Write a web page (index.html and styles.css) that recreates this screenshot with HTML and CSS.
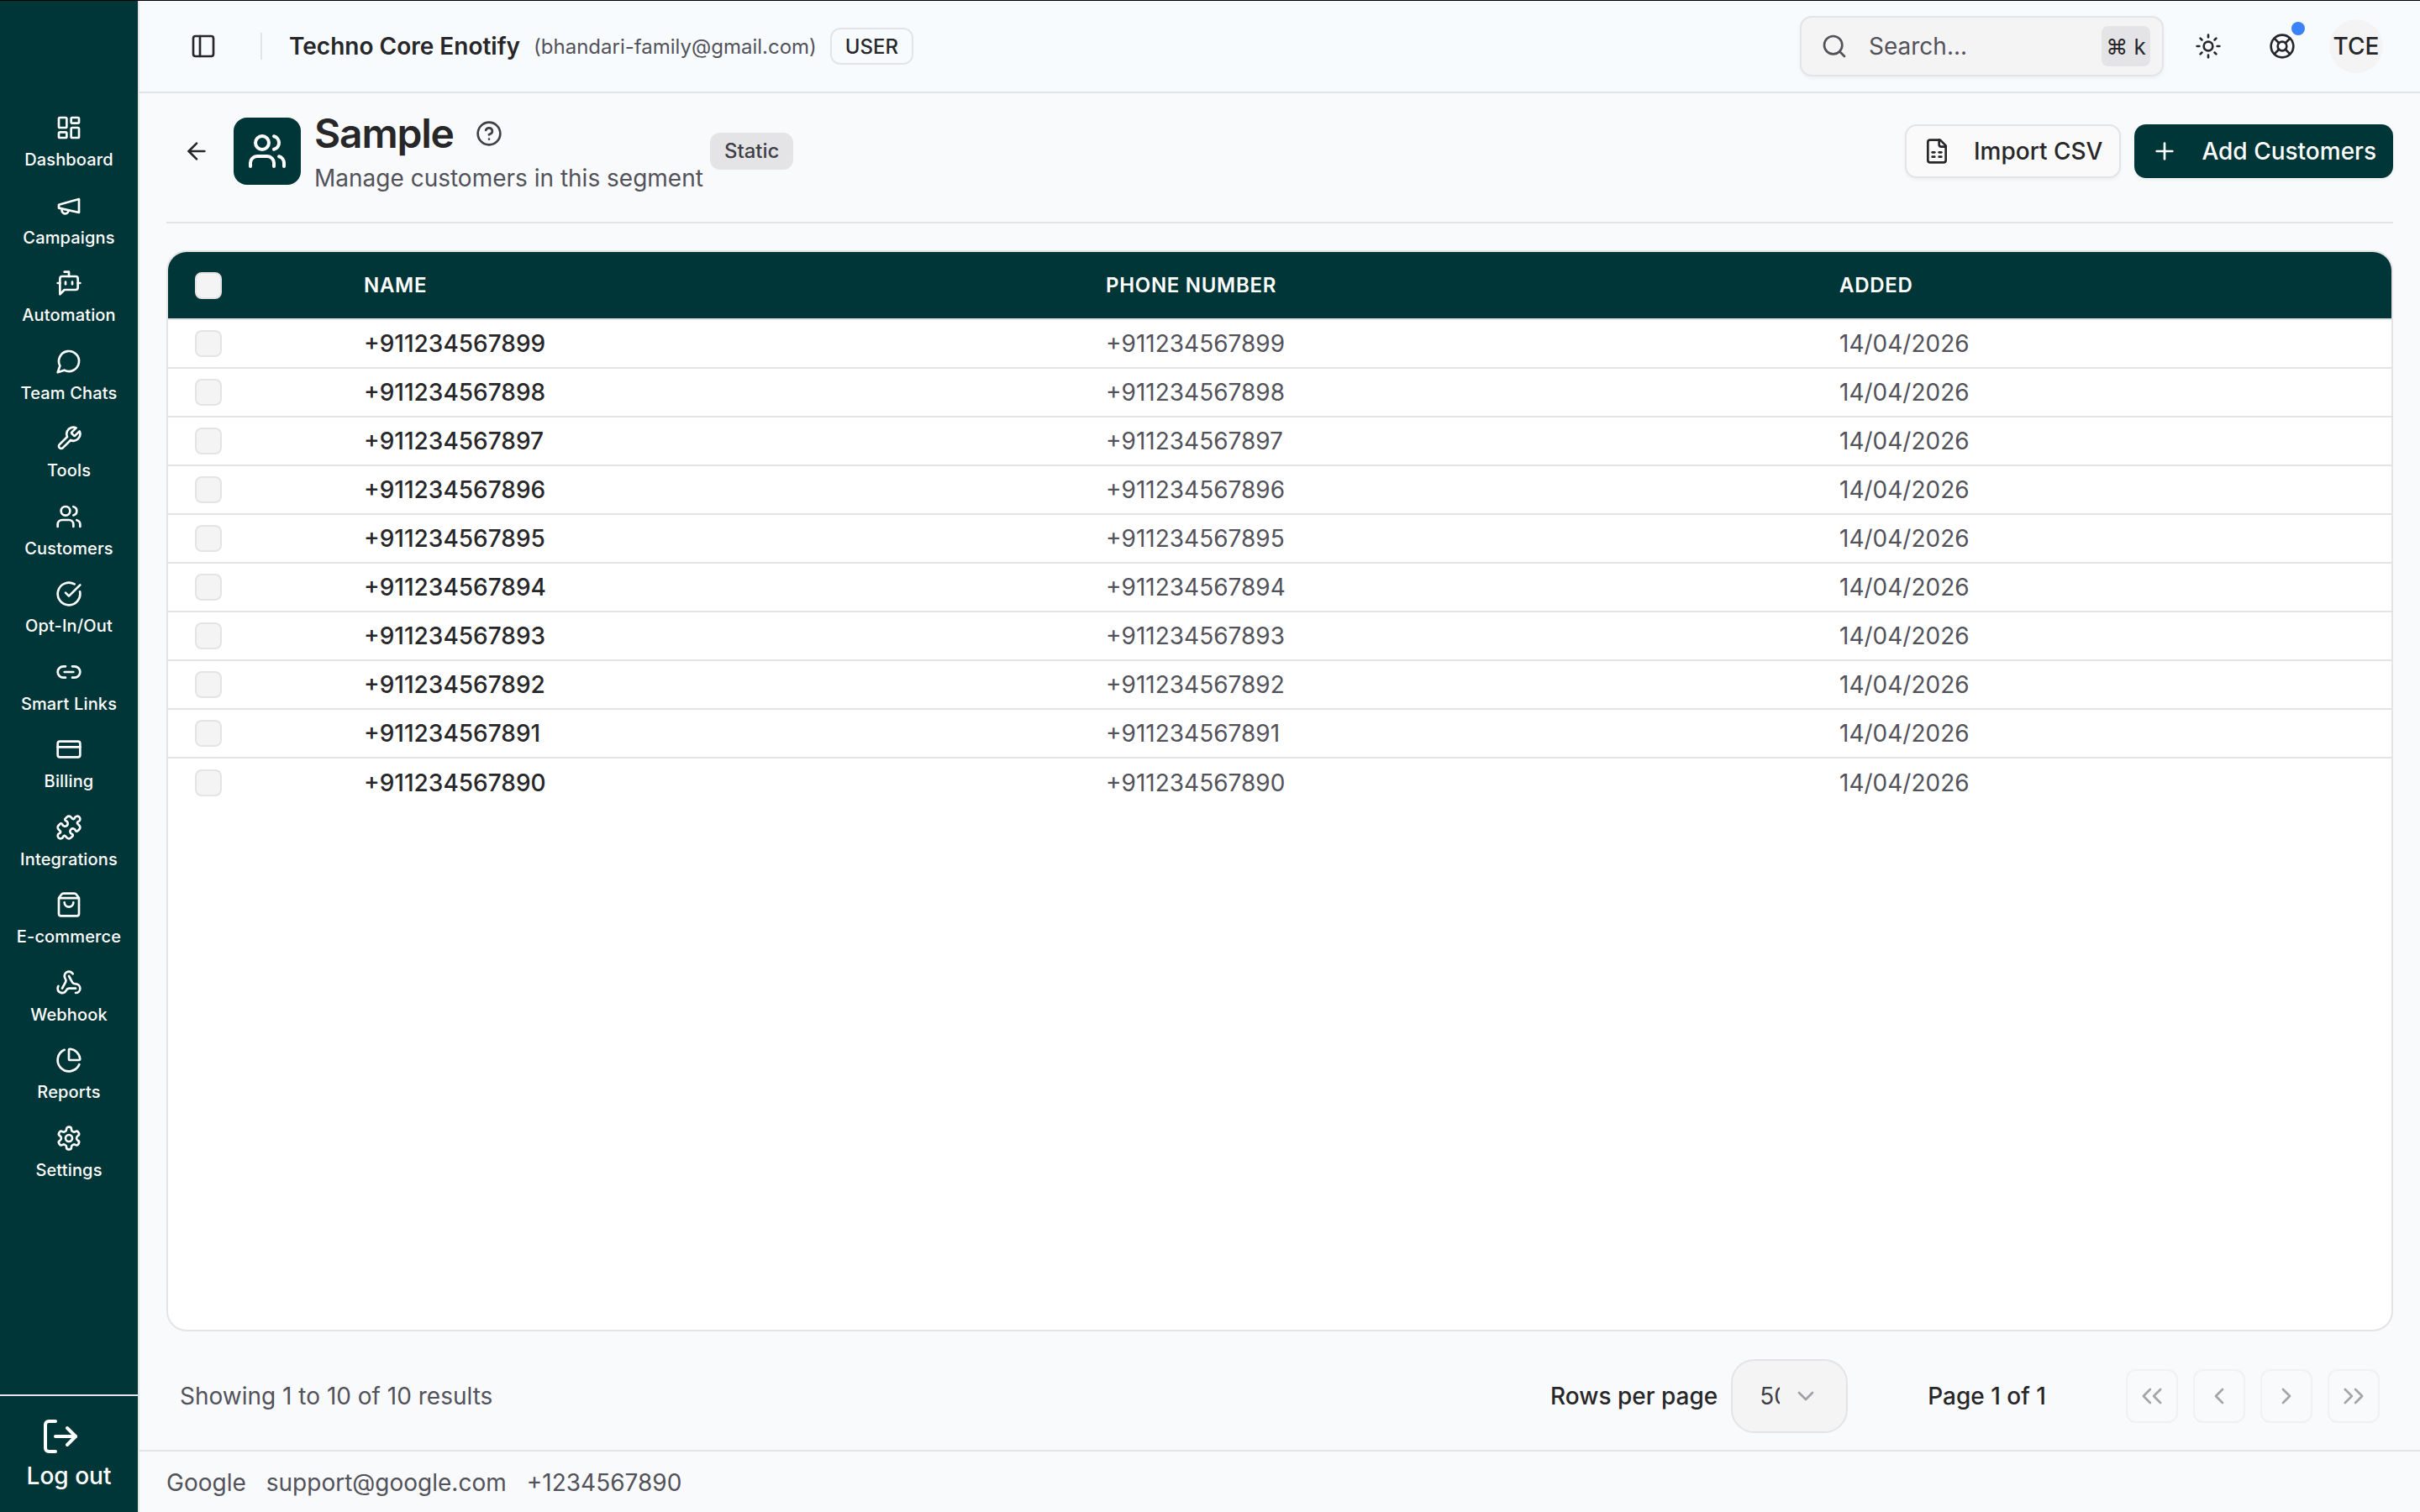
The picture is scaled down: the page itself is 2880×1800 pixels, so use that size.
FILE: index.html
```html
<!DOCTYPE html>
<html lang="en">
<head>
<meta charset="utf-8">
<title>Sample</title>
<link rel="stylesheet" href="styles.css">
</head>
<body>
<div class="app">
  <aside class="sidebar">
    <nav class="nav">
      <a class="nav-item"><svg class="ic" viewBox="0 0 24 24"><rect x="3" y="3" width="7" height="9" rx="1"/><rect x="14" y="3" width="7" height="5" rx="1"/><rect x="14" y="12" width="7" height="9" rx="1"/><rect x="3" y="16" width="7" height="5" rx="1"/></svg><span>Dashboard</span></a>
      <a class="nav-item"><svg class="ic" viewBox="0 0 24 24"><path d="m3 11 18-5v12L3 14v-3z"/><path d="M11.6 16.8a3 3 0 1 1-5.8-1.6"/></svg><span>Campaigns</span></a>
      <a class="nav-item"><svg class="ic" viewBox="0 0 24 24"><path d="M12 6V2H8"/><path d="m8 18-4 4V8a2 2 0 0 1 2-2h12a2 2 0 0 1 2 2v8a2 2 0 0 1-2 2Z"/><path d="M2 12h2"/><path d="M9 11v2"/><path d="M15 11v2"/><path d="M20 12h2"/></svg><span>Automation</span></a>
      <a class="nav-item"><svg class="ic" viewBox="0 0 24 24"><path d="M7.9 20A9 9 0 1 0 4 16.1L2 22Z"/></svg><span>Team Chats</span></a>
      <a class="nav-item"><svg class="ic" viewBox="0 0 24 24"><path d="M14.7 6.3a1 1 0 0 0 0 1.4l1.6 1.6a1 1 0 0 0 1.4 0l3.77-3.77a6 6 0 0 1-7.94 7.94l-6.91 6.91a2.12 2.12 0 0 1-3-3l6.91-6.91a6 6 0 0 1 7.94-7.94l-3.76 3.76z"/></svg><span>Tools</span></a>
      <a class="nav-item"><svg class="ic" viewBox="0 0 24 24"><path d="M16 21v-2a4 4 0 0 0-4-4H6a4 4 0 0 0-4 4v2"/><circle cx="9" cy="7" r="4"/><path d="M22 21v-2a4 4 0 0 0-3-3.87"/><path d="M16 3.13a4 4 0 0 1 0 7.75"/></svg><span>Customers</span></a>
      <a class="nav-item"><svg class="ic" viewBox="0 0 24 24"><path d="M21.801 10A10 10 0 1 1 17 3.335"/><path d="m9 11 3 3L22 4"/></svg><span>Opt-In/Out</span></a>
      <a class="nav-item"><svg class="ic" viewBox="0 0 24 24"><path d="M9 17H7A5 5 0 0 1 7 7h2"/><path d="M15 7h2a5 5 0 1 1 0 10h-2"/><line x1="8" x2="16" y1="12" y2="12"/></svg><span>Smart Links</span></a>
      <a class="nav-item"><svg class="ic" viewBox="0 0 24 24"><rect width="20" height="14" x="2" y="5" rx="2"/><line x1="2" x2="22" y1="10" y2="10"/></svg><span>Billing</span></a>
      <a class="nav-item"><svg class="ic" viewBox="0 0 24 24"><path d="M19.439 7.85c-.049.322.059.648.289.878l1.568 1.568c.47.47.706 1.087.706 1.704s-.235 1.233-.706 1.704l-1.611 1.611a.98.98 0 0 1-.837.276c-.47-.07-.802-.48-.968-.925a2.501 2.501 0 1 0-3.214 3.214c.446.166.855.497.925.968a.979.979 0 0 1-.276.837l-1.61 1.61a2.404 2.404 0 0 1-1.705.707 2.402 2.402 0 0 1-1.704-.706l-1.568-1.568a1.026 1.026 0 0 0-.877-.29c-.493.074-.84.504-1.02.968a2.5 2.5 0 1 1-3.237-3.237c.464-.18.894-.527.967-1.02a1.026 1.026 0 0 0-.289-.877l-1.568-1.568A2.402 2.402 0 0 1 1.998 12c0-.617.236-1.234.706-1.704L4.23 8.77c.24-.24.581-.353.917-.303.515.077.877.528 1.073 1.01a2.5 2.5 0 1 0 3.259-3.259c-.482-.196-.933-.558-1.01-1.073-.05-.336.062-.676.303-.917l1.525-1.525A2.402 2.402 0 0 1 12 1.998c.617 0 1.234.236 1.704.706l1.568 1.568c.23.23.556.338.877.29.493-.074.84-.504 1.02-.968a2.5 2.5 0 1 1 3.237 3.237c-.464.18-.894.527-.967 1.02Z"/></svg><span>Integrations</span></a>
      <a class="nav-item"><svg class="ic" viewBox="0 0 24 24"><path d="M16 10a4 4 0 0 1-8 0"/><path d="M3.103 6.034h17.794"/><path d="M3.4 5.467a2 2 0 0 0-.4 1.2V20a2 2 0 0 0 2 2h14a2 2 0 0 0 2-2V6.667a2 2 0 0 0-.4-1.2l-2-2.667A2 2 0 0 0 17 2H7a2 2 0 0 0-1.6.8z"/></svg><span>E-commerce</span></a>
      <a class="nav-item"><svg class="ic" viewBox="0 0 24 24"><path d="M18 16.98h-5.99c-1.1 0-1.95.94-2.48 1.9A4 4 0 0 1 2 17c.01-.7.2-1.4.57-2"/><path d="m6 17 3.13-5.78c.53-.97.1-2.18-.5-3.1a4 4 0 1 1 6.89-4.06"/><path d="m12 6 3.13 5.73C15.66 12.7 16.9 13 18 13a4 4 0 0 1 0 8"/></svg><span>Webhook</span></a>
      <a class="nav-item"><svg class="ic" viewBox="0 0 24 24"><path d="M21 12c.552 0 1.005-.449.95-.998a10 10 0 0 0-8.953-8.951c-.55-.055-.998.398-.998.95v8a1 1 0 0 0 1 1z"/><path d="M21.21 15.89A10 10 0 1 1 8 2.83"/></svg><span>Reports</span></a>
      <a class="nav-item"><svg class="ic" viewBox="0 0 24 24"><path d="M12.22 2h-.44a2 2 0 0 0-2 2v.18a2 2 0 0 1-1 1.73l-.43.25a2 2 0 0 1-2 0l-.15-.08a2 2 0 0 0-2.73.73l-.22.38a2 2 0 0 0 .73 2.73l.15.1a2 2 0 0 1 1 1.72v.51a2 2 0 0 1-1 1.74l-.15.09a2 2 0 0 0-.73 2.73l.22.38a2 2 0 0 0 2.73.73l.15-.08a2 2 0 0 1 2 0l.43.25a2 2 0 0 1 1 1.73V20a2 2 0 0 0 2 2h.44a2 2 0 0 0 2-2v-.18a2 2 0 0 1 1-1.73l.43-.25a2 2 0 0 1 2 0l.15.08a2 2 0 0 0 2.73-.73l.22-.39a2 2 0 0 0-.73-2.73l-.15-.08a2 2 0 0 1-1-1.74v-.5a2 2 0 0 1 1-1.74l.15-.09a2 2 0 0 0 .73-2.73l-.22-.38a2 2 0 0 0-2.73-.73l-.15.08a2 2 0 0 1-2 0l-.43-.25a2 2 0 0 1-1-1.73V4a2 2 0 0 0-2-2z"/><circle cx="12" cy="12" r="3"/></svg><span>Settings</span></a>
    </nav>
    <div class="logout">
      <svg class="ic ic-logout" viewBox="0 0 24 24"><path d="M9 21H5a2 2 0 0 1-2-2V5a2 2 0 0 1 2-2h4"/><path d="m16 17 5-5-5-5"/><path d="M21 12H9"/></svg>
      <span>Log out</span>
    </div>
  </aside>

  <div class="main">
    <header class="topbar">
      <svg class="ic ic-dark ic-panel" viewBox="0 0 24 24"><rect width="18" height="18" x="3" y="3" rx="2"/><path d="M9 3v18"/></svg>
      <div class="vline"></div>
      <span class="org">Techno Core Enotify</span>
      <span class="email">(bhandari-family@gmail.com)</span>
      <span class="role">USER</span>
      <div class="spacer"></div>
      <div class="search">
        <svg class="ic ic-muted" viewBox="0 0 24 24"><path d="m21 21-4.3-4.3"/><circle cx="11" cy="11" r="8"/></svg>
        <span class="search-text">Search...</span>
        <kbd class="kbd">⌘ k</kbd>
      </div>
      <svg class="ic ic-dark ic-sun" viewBox="0 0 24 24"><circle cx="12" cy="12" r="4"/><path d="M12 2v2"/><path d="M12 20v2"/><path d="m4.93 4.93 1.41 1.41"/><path d="m17.66 17.66 1.41 1.41"/><path d="M2 12h2"/><path d="M20 12h2"/><path d="m6.34 17.66-1.41 1.41"/><path d="m19.07 4.93-1.41 1.41"/></svg>
      <div class="help">
        <svg class="ic ic-dark" viewBox="0 0 24 24"><circle cx="12" cy="12" r="10"/><path d="m4.93 4.93 4.24 4.24"/><path d="m14.83 9.17 4.24-4.24"/><path d="m14.83 14.83 4.24 4.24"/><path d="m9.17 14.83-4.24 4.24"/><circle cx="12" cy="12" r="4"/></svg>
        <span class="dot"></span>
      </div>
      <div class="avatar">TCE</div>
    </header>

    <main class="content">
      <section class="page-head">
        <svg class="ic ic-dark ic-back" viewBox="0 0 24 24"><path d="m12 19-7-7 7-7"/><path d="M19 12H5"/></svg>
        <div class="page-icon"><svg class="ic ic-page" viewBox="0 0 24 24"><path d="M16 21v-2a4 4 0 0 0-4-4H6a4 4 0 0 0-4 4v2"/><circle cx="9" cy="7" r="4"/><path d="M22 21v-2a4 4 0 0 0-3-3.87"/><path d="M16 3.13a4 4 0 0 1 0 7.75"/></svg></div>
        <div class="page-titles">
          <div class="title-row">
            <h1 class="title">Sample</h1>
            <svg class="ic ic-muted-dark" viewBox="0 0 24 24"><circle cx="12" cy="12" r="10"/><path d="M9.09 9a3 3 0 0 1 5.83 1c0 2-3 3-3 3"/><path d="M12 17h.01"/></svg>
          </div>
          <p class="subtitle">Manage customers in this segment</p>
        </div>
        <span class="badge">Static</span>
        <div class="spacer"></div>
        <button class="btn btn-outline"><svg class="ic ic-dark" viewBox="0 0 24 24"><path d="M15 2H6a2 2 0 0 0-2 2v16a2 2 0 0 0 2 2h12a2 2 0 0 0 2-2V7Z"/><path d="M14 2v4a2 2 0 0 0 2 2h4"/><path d="M8 13h2"/><path d="M14 13h2"/><path d="M8 17h2"/><path d="M14 17h2"/></svg>Import CSV</button>
        <button class="btn btn-primary"><svg class="ic" viewBox="0 0 24 24"><path d="M5 12h14"/><path d="M12 5v14"/></svg>Add Customers</button>
      </section>

      <section class="card">
        <table class="table">
          <colgroup><col class="c1"><col class="c2"><col class="c3"><col class="c4"></colgroup>
          <thead>
            <tr><th><span class="check check-head"></span></th><th>NAME</th><th>PHONE NUMBER</th><th>ADDED</th></tr>
          </thead>
          <tbody>
            <tr><td><span class="check"></span></td><td class="name">+911234567899</td><td>+911234567899</td><td>14/04/2026</td></tr>
            <tr><td><span class="check"></span></td><td class="name">+911234567898</td><td>+911234567898</td><td>14/04/2026</td></tr>
            <tr><td><span class="check"></span></td><td class="name">+911234567897</td><td>+911234567897</td><td>14/04/2026</td></tr>
            <tr><td><span class="check"></span></td><td class="name">+911234567896</td><td>+911234567896</td><td>14/04/2026</td></tr>
            <tr><td><span class="check"></span></td><td class="name">+911234567895</td><td>+911234567895</td><td>14/04/2026</td></tr>
            <tr><td><span class="check"></span></td><td class="name">+911234567894</td><td>+911234567894</td><td>14/04/2026</td></tr>
            <tr><td><span class="check"></span></td><td class="name">+911234567893</td><td>+911234567893</td><td>14/04/2026</td></tr>
            <tr><td><span class="check"></span></td><td class="name">+911234567892</td><td>+911234567892</td><td>14/04/2026</td></tr>
            <tr><td><span class="check"></span></td><td class="name">+911234567891</td><td>+911234567891</td><td>14/04/2026</td></tr>
            <tr><td><span class="check"></span></td><td class="name">+911234567890</td><td>+911234567890</td><td>14/04/2026</td></tr>
          </tbody>
        </table>
      </section>

      <section class="pager">
        <span class="showing">Showing 1 to 10 of 10 results</span>
        <div class="spacer"></div>
        <span class="pager-label">Rows per page</span>
        <div class="select"><span class="select-value">50</span><svg class="ic ic-chev" viewBox="0 0 24 24"><path d="m6 9 6 6 6-6"/></svg></div>
        <span class="page-no">Page 1 of 1</span>
        <div class="pg-btns">
          <span class="pg"><svg class="ic ic-dark" viewBox="0 0 24 24"><path d="m10.4 18-6-6 6-6"/><path d="m19.6 18-6-6 6-6"/></svg></span>
          <span class="pg"><svg class="ic ic-dark" viewBox="0 0 24 24"><path d="m15 18-6-6 6-6"/></svg></span>
          <span class="pg"><svg class="ic ic-dark" viewBox="0 0 24 24"><path d="m9 18 6-6-6-6"/></svg></span>
          <span class="pg"><svg class="ic ic-dark" viewBox="0 0 24 24"><path d="m4.4 18 6-6-6-6"/><path d="m13.6 18 6-6-6-6"/></svg></span>
        </div>
      </section>
    </main>

    <footer class="footer">
      <span>Google</span><span>support@google.com</span><span>+1234567890</span>
    </footer>
  </div>
</div>
</body>
</html>
```

FILE: styles.css
```css
* { box-sizing: border-box; }
html, body { margin: 0; padding: 0; }
body {
  width: 2880px;
  height: 1800px;
  overflow: hidden;
  font-family: "Inter", "Liberation Sans", sans-serif;
  color: #18181b;
  background: #f9fafb;
}
.app {
  display: flex;
  height: 1800px;
  border-top: 1px solid #000;
}
.spacer { flex: 1; }

.ic {
  width: 32px;
  height: 32px;
  flex: none;
  fill: none;
  stroke: currentColor;
  stroke-width: 2;
  stroke-linecap: round;
  stroke-linejoin: round;
  display: block;
}
.ic-dark { color: #27272a; }
.ic-muted { color: #52525b; }
.ic-muted-dark { color: #3f3f46; }

/* sidebar */
.sidebar {
  width: 166px;
  flex: none;
  display: flex;
  flex-direction: column;
  background: #013638;
  border-right: 2px solid #e4e4e7;
  color: #fff;
}
.nav {
  flex: 1;
  display: flex;
  flex-direction: column;
  padding-top: 135px;
}
.nav-item {
  height: 92.5px;
  flex: none;
  display: flex;
  flex-direction: column;
  align-items: center;
  gap: 6px;
}
.nav-item span {
  font-size: 20px;
  letter-spacing: .15px;
  line-height: 32px;
  font-weight: 500;
  white-space: nowrap;
}
.logout {
  height: 140px;
  border-top: 2px solid #e4e4e7;
  display: flex;
  flex-direction: column;
  align-items: center;
  padding-top: 24px;
  font-size: 28px;
  line-height: 40px;
  font-weight: 500;
}
.ic-logout { width: 48px; height: 48px; margin-left: -20px; margin-bottom: 3px; }

/* main */
.main {
  flex: 1;
  min-width: 0;
  display: flex;
  flex-direction: column;
}
.topbar {
  height: 110px;
  flex: none;
  display: flex;
  align-items: center;
  padding: 0 44px 0 60px;
  background: #f8fbfe;
  border-bottom: 2px solid #e4e4e7;
}
.vline {
  width: 2px;
  height: 32px;
  margin: 0 32px 0 52px;
  background: #e4e4e7;
}
.org {
  font-size: 28px;
  font-weight: 600;
  color: #27272a;
  white-space: nowrap;
}
.email {
  margin-left: 16px;
  font-size: 24px;
  color: #52525b;
  white-space: nowrap;
}
.role {
  margin-left: 16px;
  height: 44px;
  padding: 0 16px;
  display: flex;
  align-items: center;
  border: 2px solid #e4e4e7;
  border-radius: 12px;
  font-size: 24px;
  font-weight: 500;
  color: #27272a;
}
.search {
  width: 433px;
  height: 72px;
  display: flex;
  align-items: center;
  padding: 0 14px 0 23px;
  background: #f4f4f5;
  border: 2px solid #e4e4e7;
  border-radius: 14px;
  box-shadow: 0 2px 4px rgba(0, 0, 0, .05);
}
.search-text {
  flex: 1;
  margin-left: 25px;
  font-size: 28px;
  color: #52525b;
}
.kbd {
  width: 58px;
  height: 48px;
  display: flex;
  align-items: center;
  justify-content: center;
  background: #e4e4e7;
  border-radius: 8px;
  font-family: "Inter", "DejaVu Sans", sans-serif;
  font-size: 26px;
  color: #27272a;
}
.ic-sun { margin-left: 37px; }
.help {
  position: relative;
  margin-left: 56px;
}
.dot {
  position: absolute;
  top: -13px;
  right: -11px;
  width: 16px;
  height: 16px;
  border-radius: 50%;
  background: #3b82f6;
}
.avatar {
  width: 64px;
  height: 64px;
  margin-left: 40px;
  display: flex;
  align-items: center;
  justify-content: center;
  border-radius: 50%;
  background: #f4f4f5;
  font-size: 28px;
  font-weight: 500;
  color: #27272a;
}

/* content */
.content {
  flex: 1;
  min-height: 0;
  display: flex;
  flex-direction: column;
  padding: 0 32px;
}
.page-head {
  height: 155px;
  flex: none;
  display: flex;
  align-items: center;
  padding-bottom: 16px;
  border-bottom: 2px solid #e4e4e7;
}
.ic-back { margin-left: 20px; }
.page-icon {
  width: 80px;
  height: 80px;
  margin-left: 28px;
  display: flex;
  align-items: center;
  justify-content: center;
  background: #013638;
  border-radius: 16px;
  color: #fff;
}
.ic-page { width: 48px; height: 48px; }
.page-titles { margin-left: 16px; padding-top: 4px; }
.title-row { display: flex; align-items: center; gap: 26px; }
.title {
  margin: 0;
  font-size: 48px;
  line-height: 52px;
  font-weight: 600;
  letter-spacing: -1.2px;
  color: #27272a;
}
.subtitle {
  margin: 9px 0 0;
  font-size: 28px;
  line-height: 36px;
  color: #52525b;
}
.badge {
  height: 44px;
  margin-left: 8px;
  padding: 0 17px;
  display: flex;
  align-items: center;
  background: #e4e4e7;
  border-radius: 12px;
  font-size: 24px;
  font-weight: 500;
  color: #3f3f46;
}
.btn {
  height: 64px;
  display: flex;
  align-items: center;
  gap: 28px;
  border-radius: 14px;
  font-family: inherit;
  font-size: 28px;
  font-weight: 500;
  white-space: nowrap;
  box-shadow: 0 2px 4px rgba(0, 0, 0, .05);
}
.btn-outline {
  padding: 0 20px;
  background: #fafafa;
  border: 2px solid #e4e4e7;
  color: #27272a;
}
.btn-primary {
  margin-left: 16px;
  padding: 0 20px;
  background: #013638;
  border: 0;
  color: #fff;
}

/* table */
.card {
  flex: 1;
  min-height: 0;
  margin-top: 32px;
  background: #fff;
  border: 2px solid #e4e4e7;
  border-radius: 24px;
  overflow: hidden;
}
.table {
  width: 100%;
  table-layout: fixed;
  border-collapse: collapse;
}
.c1 { width: 201px; }
.c2 { width: 883px; }
.c3 { width: 873px; }
.table th {
  height: 80px;
  padding: 0 0 0 32px;
  background: #013638;
  border-bottom: 2px solid #e4e4e7;
  color: #fff;
  text-align: left;
  font-size: 24px;
  font-weight: 600;
  letter-spacing: .7px;
}
.table td {
  height: 58px;
  padding: 0 0 0 32px;
  border-bottom: 2px solid #e4e4e7;
  font-size: 28px;
  color: #52525b;
}
.table tbody tr:last-child td { border-bottom: 0; }
.table td.name { color: #27272a; font-weight: 500; }
.check {
  display: block;
  width: 32px;
  height: 32px;
  background: #f4f4f5;
  border: 2px solid #e4e4e7;
  border-radius: 8px;
}

/* pager */
.pager {
  height: 141px;
  flex: none;
  display: flex;
  align-items: center;
  padding: 13px 16px 0;
  font-size: 28px;
}
.showing { color: #52525b; }
.pager-label { font-weight: 500; color: #27272a; }
.select {
  width: 139px;
  height: 88px;
  margin-left: 16px;
  display: flex;
  align-items: center;
  padding-left: 32px;
  gap: 15px;
  background: #f4f4f5;
  border: 2px solid #e4e4e7;
  border-radius: 28px;
}
.select-value {
  width: 24px;
  overflow: hidden;
  white-space: nowrap;
  color: #3f3f46;
}
.ic-chev { color: #a1a1aa; }
.page-no {
  margin-left: 95px;
  font-weight: 500;
  color: #27272a;
}
.pg-btns {
  display: flex;
  gap: 18px;
  margin-left: 95px;
}
.pg {
  width: 62px;
  height: 64px;
  display: flex;
  align-items: center;
  justify-content: center;
  border: 2px solid #e4e4e7;
  border-radius: 12px;
  opacity: .4;
}

.footer {
  height: 74px;
  flex: none;
  display: flex;
  align-items: center;
  gap: 24px;
  padding-left: 32px;
  padding-top: 2px;
  border-top: 2px solid #e4e4e7;
  font-size: 28px;
  color: #52525b;
}
```
